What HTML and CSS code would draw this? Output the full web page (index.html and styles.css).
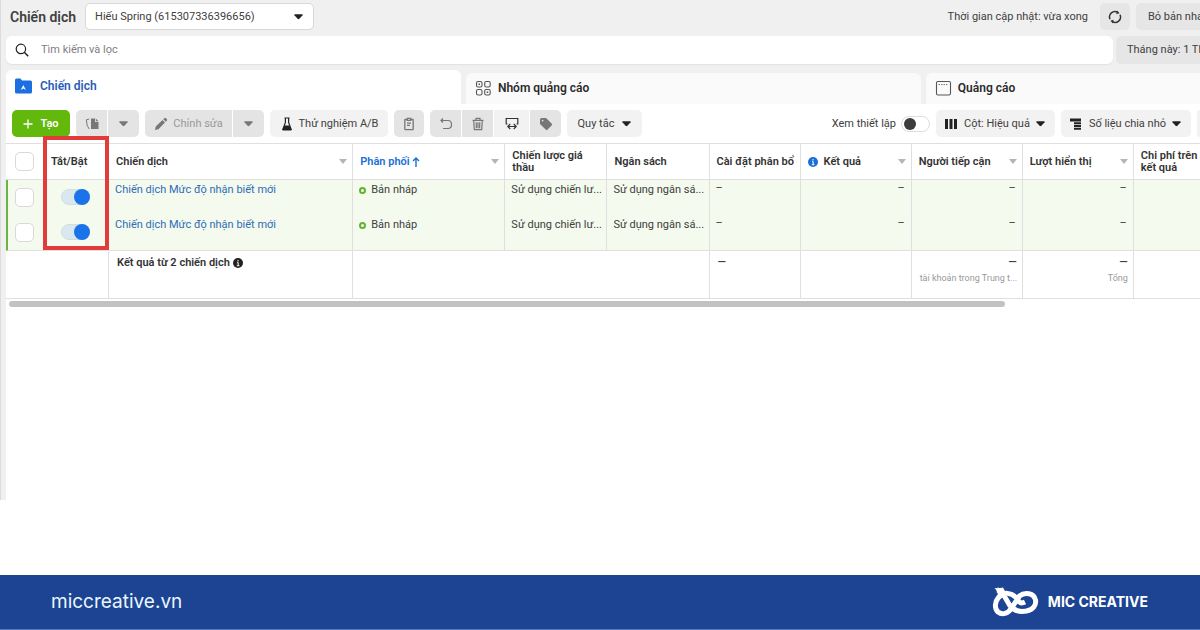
FILE: index.html
```html
<!DOCTYPE html>
<html lang="vi">
<head>
<meta charset="utf-8">
<meta name="viewport" content="width=device-width, initial-scale=1">
<title>Chiến dịch</title>
<link rel="stylesheet" href="styles.css">
</head>
<body>
<main class="app">
  <header class="topbar">
    <h1 class="title">Chiến dịch</h1>
    <div class="account">
      <select class="account-select" aria-label="Tài khoản"><option>Hiếu Spring (615307336396656)</option></select>
      <svg class="caret account-caret" viewBox="0 0 10 6"><path d="M1 0h8q1 0 .5 1L6 5Q5 6 4 5L.5 1Q0 0 1 0z"/></svg>
    </div>
    <span class="updated">Thời gian cập nhật: vừa xong</span>
    <button class="btn btn-dim btn-icon" aria-label="Làm mới">
      <svg class="icon" viewBox="0 0 14 14" fill="none" stroke="#333" stroke-width="1.5"><path d="M2 9.2A5.4 5.4 0 0 1 9.8 2.4M12 4.8A5.4 5.4 0 0 1 4.2 11.6"/><path d="M9 .6l2.6 2.6-3.2 1zM5 13.400l-2.600-2.600 3.200-1z" fill="#333" stroke="none"/></svg>
    </button>
    <button class="btn btn-dim btn-discard">Bỏ bản nháp</button>
  </header>

  <div class="search-row">
    <label class="search">
      <svg class="icon" viewBox="0 0 14 14" fill="none" stroke="#222" stroke-width="1.2"><circle cx="5.900" cy="5.900" r="4.700"/><path d="M9.300 9.300l3.900 3.900" stroke-width="1.500"/></svg>
      <input class="search-input" type="text" placeholder="Tìm kiếm và lọc" aria-label="Tìm kiếm và lọc">
    </label>
    <button class="btn btn-dim btn-date">Tháng này: 1 Tháng</button>
  </div>

  <nav class="tabs">
    <a class="tab tab-active" href="#campaigns">
      <svg class="tab-icon" viewBox="0 0 17 16"><path d="M0 2q0-1.500 1.500-1.500h4L7 2.500h8.500Q17 2.500 17 4v10q0 1.500-1.500 1.500h-14Q0 15.500 0 14z" fill="#1b6fe0"/><path d="M8.300 7l2.600 5-2.600-1.400L5.700 12z" fill="#fff"/></svg>
      Chiến dịch</a>
    <a class="tab" href="#adsets">
      <svg class="tab-icon" viewBox="0 0 16 16" fill="none" stroke="#555" stroke-width="1.100"><rect x="1" y="1.500" width="5.500" height="5.500" rx="1.600"/><rect x="9.200" y="1.500" width="5.500" height="5.500" rx="1.600"/><rect x="1" y="9.500" width="5.500" height="5.500" rx="1.600"/><rect x="9.200" y="9.500" width="5.500" height="5.500" rx="1.600"/><path d="M3 4.200h1.500M11.200 12.200h1.500" stroke-width="1.500"/></svg>
      Nhóm quảng cáo</a>
    <a class="tab" href="#ads">
      <svg class="tab-icon" viewBox="0 0 16 16" fill="none" stroke="#555" stroke-width="1.100"><rect x="1" y="1.500" width="14" height="13.500" rx="1.500"/><path d="M3 4.600h1.500M5.500 4.600h7.500" stroke-width=".8" stroke-dasharray="1.500 1"/></svg>
      Quảng cáo</a>
  </nav>

  <section class="panel">
    <div class="toolbar">
      <button class="btn btn-create"><svg class="icon-small" viewBox="0 0 10 10" stroke="#fff" stroke-width="1.300"><path d="M5 .5v9M.5 5h9"/></svg>Tạo</button>
      <div class="group">
        <button class="btn btn-off btn-icon" aria-label="Nhân bản"><svg class="icon" viewBox="0 0 14 14" fill="#777"><path d="M6 1.500h4V5h3.500v7H6z"/><path d="M10.800 1.500l2.700 2.700h-2.700z"/><path d="M4.200 2L1.400 2.800 2.200 8.500l2 3.500" fill="none" stroke="#777"/></svg></button>
        <button class="btn btn-off btn-icon" aria-label="Tùy chọn nhân bản"><svg class="caret" viewBox="0 0 10 6"><path d="M1 0h8q1 0 .5 1L6 5Q5 6 4 5L.5 1Q0 0 1 0z"/></svg></button>
      </div>
      <div class="group">
        <button class="btn btn-off btn-edit"><svg class="icon" viewBox="0 0 14 14" fill="#777"><path d="M1 13l.8-3.400L8.500 3 11 5.500 4.400 12.200zM9.300 2.200l1-1q.8-.7 1.600 0l.9.900q.8.800 0 1.600l-1 1z"/></svg>Chỉnh sửa</button>
        <button class="btn btn-off btn-icon" aria-label="Tùy chọn chỉnh sửa"><svg class="caret" viewBox="0 0 10 6"><path d="M1 0h8q1 0 .5 1L6 5Q5 6 4 5L.5 1Q0 0 1 0z"/></svg></button>
      </div>
      <button class="btn btn-test"><svg class="icon" viewBox="0 0 14 14"><path d="M4.500 1h5M5.400 1v4.500L3 12q-.4 1 .6 1h6.800q1 0 .6-1L8.600 5.500V1" fill="none" stroke="#222" stroke-width="1.200"/><path d="M4.500 8.500h5l2.500 4.500H2z" fill="#222"/></svg>Thử nghiệm A/B</button>
      <button class="btn btn-off btn-icon" aria-label="Bảng tạm"><svg class="icon" viewBox="0 0 14 14" fill="none" stroke="#777" stroke-width="1.300"><path d="M5 2.500H3.400q-.6 0-.6.600V12q0 .6.600.6h7.200q.6 0 .6-.6V3.100q0-.6-.6-.6H9"/><path d="M5.300 1.300h3.400v2H5.300zM5 6.200h4M5 8.300h3"/></svg></button>
      <div class="group">
        <button class="btn btn-off btn-icon" aria-label="Hoàn tác"><svg class="icon" viewBox="0 0 14 14" fill="none" stroke="#777" stroke-width="1.200"><path d="M2 3.500h7q3.500 0 3.500 4t-3.500 4H4M4 1.500L2 3.500 4 5.500"/></svg></button>
        <button class="btn btn-off btn-icon" aria-label="Xóa"><svg class="icon" viewBox="0 0 14 14" fill="none" stroke="#777" stroke-width="1.200"><path d="M1.500 3.300h11M5 3V1.400h4V3M2.700 3.500l.6 9.100h7.400l.6-9.100M5.200 5.200l.2 6M7 5.200v6M8.800 5.200l-.2 6"/></svg></button>
        <button class="btn btn-swap btn-icon" aria-label="Xuất và nhập"><svg class="icon" viewBox="0 0 14 14" fill="none" stroke="#333" stroke-width="1.200"><path d="M2.500 7H1.200V1.500h11.600V7h-1.300M3 9.500h8M5.300 7L2.800 9.500l2.500 2.500M8.700 7l2.500 2.500-2.500 2.500"/></svg></button>
        <button class="btn btn-off btn-icon" aria-label="Gắn thẻ"><svg class="icon" viewBox="0 0 14 14"><path d="M1 2.500Q1 1 2.500 1H7l5.600 5.600q1 1 0 2l-4 4q-1 1-2 0L1 7z" fill="#777"/><circle cx="3.600" cy="3.600" r=".9" fill="#e4e4e4"/></svg></button>
      </div>
      <button class="btn btn-menu">Quy tắc<svg class="caret" viewBox="0 0 10 6"><path d="M1 0h8q1 0 .5 1L6 5Q5 6 4 5L.5 1Q0 0 1 0z"/></svg></button>
      <label class="setup">Xem thiết lập<input class="switch" type="checkbox" role="switch"></label>
      <button class="btn btn-columns"><svg class="icon" viewBox="0 0 14 14" fill="#222"><path d="M1 2h3v10H1zM5.500 2h3v10h-3zM10 2h3v10h-3z"/></svg>Cột: Hiệu quả<svg class="caret" viewBox="0 0 10 6"><path d="M1 0h8q1 0 .5 1L6 5Q5 6 4 5L.5 1Q0 0 1 0z"/></svg></button>
      <button class="btn btn-columns"><svg class="icon" viewBox="0 0 14 14" fill="#222"><path d="M1 1.500h11v3H1zM5 5.300h7v2H5zM5 8h7v2H5zM5 10.700h7v2H5z"/></svg>Số liệu chia nhỏ<svg class="caret" viewBox="0 0 10 6"><path d="M1 0h8q1 0 .5 1L6 5Q5 6 4 5L.5 1Q0 0 1 0z"/></svg></button>
      <button class="btn btn-rest" aria-label="Báo cáo"></button>
    </div>

    <div class="grid">
      <table class="table">
        <colgroup><col class="c-check"><col class="c-switch"><col class="c-name"><col class="c-delivery"><col class="c-text"><col class="c-text"><col class="c-alloc"><col class="c-num"><col class="c-num"><col class="c-num"><col class="c-num"></colgroup>
        <thead>
          <tr>
            <th class="open"><input class="check" type="checkbox" aria-label="Chọn tất cả"></th>
            <th class="open switch-head">Tắt/Bật</th>
            <th><span class="head">Chiến dịch<svg class="sort" viewBox="0 0 8 5"><path d="M0 0h8L4 5z"/></svg></span></th>
            <th class="sorted"><span class="head">Phân phối<svg class="arrow" viewBox="0 0 8 10" fill="none" stroke="#1a6fd6" stroke-width="1.400"><path d="M4 10V1M1 4l3-3 3 3"/></svg><svg class="sort" viewBox="0 0 8 5"><path d="M0 0h8L4 5z"/></svg></span></th>
            <th>Chiến lược giá thầu</th>
            <th>Ngân sách</th>
            <th class="nowrap">Cài đặt phân bổ</th>
            <th><span class="head"><svg class="info info-blue" viewBox="0 0 10 10"><circle cx="5" cy="5" r="5"/><path d="M5 2v1.500M4 4.700h1.200v3M3.800 7.700h2.600" stroke="#fff" fill="none"/></svg>Kết quả<svg class="sort" viewBox="0 0 8 5"><path d="M0 0h8L4 5z"/></svg></span></th>
            <th><span class="head">Người tiếp cận<svg class="sort" viewBox="0 0 8 5"><path d="M0 0h8L4 5z"/></svg></span></th>
            <th><span class="head">Lượt hiển thị<svg class="sort" viewBox="0 0 8 5"><path d="M0 0h8L4 5z"/></svg></span></th>
            <th class="nowrap">Chi phí trên mỗi<br>kết quả</th>
          </tr>
        </thead>
        <tbody>
          <tr class="row">
            <td class="open mark"><input class="check" type="checkbox" aria-label="Chọn chiến dịch 1"></td>
            <td class="open center"><input class="switch" type="checkbox" role="switch" checked aria-label="Bật chiến dịch 1"></td>
            <td><a class="link" href="#c1">Chiến dịch Mức độ nhận biết mới</a></td>
            <td><span class="status">Bản nháp</span></td>
            <td class="clip">Sử dụng chiến lư...</td>
            <td class="clip">Sử dụng ngân sá...</td>
            <td class="dash">–</td><td class="dash num">–</td><td class="dash num">–</td><td class="dash num">–</td><td></td>
          </tr>
          <tr class="row">
            <td class="open mark"><input class="check" type="checkbox" aria-label="Chọn chiến dịch 2"></td>
            <td class="open center"><input class="switch" type="checkbox" role="switch" checked aria-label="Bật chiến dịch 2"></td>
            <td><a class="link" href="#c2">Chiến dịch Mức độ nhận biết mới</a></td>
            <td><span class="status">Bản nháp</span></td>
            <td class="clip">Sử dụng chiến lư...</td>
            <td class="clip">Sử dụng ngân sá...</td>
            <td class="dash">–</td><td class="dash num">–</td><td class="dash num">–</td><td class="dash num">–</td><td></td>
          </tr>
        </tbody>
        <tfoot>
          <tr>
            <td colspan="2"></td>
            <td class="total">Kết quả từ 2 chiến dịch <svg class="info" viewBox="0 0 10 10"><circle cx="5" cy="5" r="5"/><path d="M5 2v1.500M4 4.700h1.200v3M3.800 7.700h2.600" stroke="#fff" fill="none"/></svg></td>
            <td colspan="3"></td>
            <td><b>—</b></td>
            <td></td>
            <td class="num"><b>—</b><small class="note">tài khoản trong Trung t...</small></td>
            <td class="num"><b>—</b><small class="note">Tổng</small></td>
            <td></td>
          </tr>
        </tfoot>
      </table>
      <div class="highlight"></div>
    </div>
    <div class="scrollbar"></div>
  </section>
</main>

<footer class="footer">
  <a class="site" href="#home">miccreative.vn</a>
  <div class="brand">
    <svg class="logo" viewBox="0 0 48 30" fill="none" stroke="#fff" stroke-width="5"><path d="M5 3C9 3.500 10 5.500 12 8.500L17.500 18C22 24.500 29 25 34.500 24C41 22.500 44.500 18 43.500 13C42 6 33 4.500 27.500 9L19.500 21C16 27 10 28 6 25C2 21.500 3 14.500 6.500 10.500C12 4.500 19 5.500 24 10.500C27 14.500 28 17.500 33 15"/><path d="M2.500 1Q7 1.500 11 .5L14 6 6 10Q6 4 2.500 1z" fill="#fff" stroke="none"/></svg>
    <span>MIC CREATIVE</span>
  </div>
</footer>
</body>
</html>
```
FILE: styles.css
```css
* { box-sizing: border-box; }

body {
  margin: 0;
  min-height: 100vh;
  display: flex;
  flex-direction: column;
  background: #fff;
  color: #404040;
  font: 11px/14px Roboto, "Noto Sans", sans-serif;
}

button, input, select { font: inherit; color: inherit; margin: 0; }
a { text-decoration: none; }
svg { flex: none; display: block; }

.app {
  display: flex;
  flex-direction: column;
  min-height: 500px;
  padding-left: 5px;
  border-left: 1px solid #dcdcdc;
  background: #f0f0f0;
  overflow: hidden;
}

.topbar {
  display: flex;
  align-items: center;
  gap: 6px;
  padding: 3px 0 6px 4px;
}
.title { margin: 0 3px 0 0; font-size: 14px; line-height: 18px; font-weight: 600; }
.account { position: relative; width: 229px; }
.account-select {
  appearance: none;
  width: 100%;
  height: 27px;
  padding: 0 24px 0 9px;
  border: 1px solid #d8d8d8;
  border-radius: 5px;
  background: #fff;
}
.account-caret { position: absolute; right: 11px; top: 11px; }
.updated { margin-left: auto; margin-right: 6px; }

.btn {
  display: flex;
  align-items: center;
  justify-content: center;
  flex: none;
  height: 27px;
  padding: 0 10px;
  border: 0;
  border-radius: 5px;
  background: #f2f2f2;
  white-space: nowrap;
  overflow: hidden;
}
.btn-dim { background: #e6e6e6; }
.btn-off { background: #e4e4e4; color: #999; }
.btn-off .caret { fill: #777; }
.btn-icon { width: 30px; padding: 0; }
.btn-discard, .btn-date {
  justify-content: flex-start;
  padding: 0 0 0 12px;
  border-radius: 5px 0 0 5px;
}
.btn-discard { width: 64px; }
.btn-date { width: 84px; height: 28px; padding-left: 11px; }
.icon { width: 14px; height: 14px; }
.icon-small { width: 10px; height: 10px; }
.caret { width: 9px; height: 6px; fill: #222; }

.search-row { display: flex; gap: 3px; }
.search {
  flex: 1;
  display: flex;
  align-items: center;
  gap: 12px;
  height: 28px;
  padding: 0 9px;
  border-radius: 6px;
  background: #fff;
  box-shadow: 0 1px 1px #e2e2e2;
}
.search-input { flex: 1; border: 0; padding: 0; outline: 0; background: none; }
.search-input::placeholder { color: #808080; opacity: 1; }

.tabs { display: flex; align-items: flex-end; gap: 5px; padding-top: 6px; }
.tab {
  display: flex;
  align-items: center;
  gap: 6px;
  flex: 0 0 38.1%;
  height: 31px;
  padding: 0 9px 2px;
  border-radius: 6px 6px 0 0;
  background: #fafafa;
  color: #2b2b2b;
  font-size: 12px;
  font-weight: 600;
}
.tab-active { height: 34px; gap: 8px; background: #fff; color: #2a5db8; }
.tab-icon { width: 17px; height: 16px; }

.panel { flex: 1; background: #fff; }
.toolbar { display: flex; align-items: center; gap: 6px; padding: 6px 0 6px 6px; }
.group { display: flex; gap: 1px; }
.group .btn { border-radius: 0; }
.group .btn:first-child { border-radius: 5px 0 0 5px; }
.group .btn:last-child { border-radius: 0 5px 5px 0; }
.group .btn-icon { width: 31px; }
.group .btn-swap { width: 35px; background: #f2f2f2; }
.btn-create { width: 58px; gap: 7px; background: #62b80b; color: #fff; font-weight: 600; }
.btn-edit { width: 87px; gap: 5px; }
.btn-test { width: 118px; gap: 5px; }
.btn-menu { width: 75px; gap: 8px; }
.btn-columns { gap: 6px; padding: 0 10px 0 8px; }
.btn-rest { width: 3px; padding: 0; border-radius: 3px 0 0 3px; }
.setup { display: flex; align-items: center; gap: 5px; margin-left: auto; white-space: nowrap; }

.switch {
  appearance: none;
  display: inline-flex;
  align-items: center;
  width: 29px;
  height: 16px;
  border: 1px solid #ddd;
  border-radius: 8px;
  background: #fff;
  vertical-align: middle;
}
.switch::before {
  content: "";
  width: 12px;
  height: 12px;
  margin-left: 2px;
  border-radius: 50%;
  background: #3c3c3c;
}
.switch:checked { justify-content: flex-end; border-color: #cfdfdf; background: #d8e8ee; }
.switch:checked::before { flex: none; width: 16px; height: 16px; margin: 0 -1px 0 0; background: #1a73e8; }

.check {
  appearance: none;
  display: block;
  width: 19px;
  height: 19px;
  border: 1px solid #d9d9d9;
  border-radius: 5px;
  background: #fff;
}

.grid { position: relative; }
.table {
  width: 1239px;
  table-layout: fixed;
  border-collapse: separate;
  border-spacing: 0;
}
.c-check { width: 36px; }
.c-switch { width: 67px; }
.c-name { width: 244px; }
.c-delivery { width: 152px; }
.c-text { width: 102px; }
.c-alloc { width: 91px; }
.c-num { width: 111px; }

.table th, .table td { border-right: 1px solid #dfdfdf; text-align: left; }
.table .open { border-right-color: transparent; }
.table th {
  height: 37px;
  padding: 0 5px 0 7px;
  border-top: 1px solid #dfdfdf;
  border-bottom: 1px solid #dfdfdf;
  color: #333;
  font-weight: 600;
  line-height: 12px;
}
.table th:first-child { padding-left: 9px; }
.table .switch-head { padding-left: 9px; }
.table .nowrap { white-space: nowrap; }
.table .sorted { color: #1a6fd6; }
.head { display: flex; align-items: center; white-space: nowrap; }
.sort { width: 8px; height: 5px; margin-left: auto; fill: #b5b5b5; }
.arrow { width: 8px; height: 10px; margin-left: 2px; }
.info { display: inline-block; width: 10px; height: 10px; fill: #222; vertical-align: -2px; }
.info-blue { margin-right: 6px; fill: #1a6fd6; }

.row { background: #f4faee; }
.row td { height: 35px; padding: 3px 6px 0; vertical-align: top; }
.row .mark { padding: 8px 0 0 7px; border-left: 2px solid #6cb33f; }
.row .center { padding: 9px 0 0 1px; text-align: center; line-height: 16px; }
.row:last-child td { height: 36px; border-bottom: 1px solid #dfdfdf; }
.link { color: #2e6db8; }
.status { display: flex; align-items: center; gap: 5px; }
.status::before {
  content: "";
  width: 3px;
  height: 3px;
  border: 2px solid #62b22f;
  border-radius: 50%;
}
.row .clip { padding-right: 0; white-space: nowrap; }
.row .dash { padding-top: 1px; }
.table .num { text-align: right; }

tfoot td {
  height: 48px;
  padding: 5px 5px 0 8px;
  border-bottom: 1px solid #dfdfdf;
  vertical-align: top;
}
.total { color: #333; font-weight: 600; }
.num b { display: block; }
tfoot b { font-weight: 500; }
.note {
  display: block;
  margin-top: 1px;
  color: #999;
  font-size: 9px;
  white-space: nowrap;
}

.highlight {
  position: absolute;
  left: 37px;
  top: -7px;
  bottom: 49px;
  width: 66px;
  border: 4px solid #e03c3c;
  pointer-events: none;
}
.scrollbar { width: 83.4%; height: 6px; margin: 2px 0 0 3px; border-radius: 3px; background: #c2c2c2; }

.footer {
  display: flex;
  align-items: center;
  justify-content: space-between;
  height: 55px;
  margin-top: auto;
  padding: 0 52px 0 51px;
  border-bottom: 1px solid #5a7ab8;
  background: #1c4492;
  color: #fff;
  font-family: Inter, sans-serif;
}
.site { color: #eaf6ff; font-size: 19px; line-height: 24px; }
.brand { display: flex; align-items: center; gap: 8px; font-size: 14px; font-weight: 700; }
.logo { width: 48px; height: 30px; }
```
